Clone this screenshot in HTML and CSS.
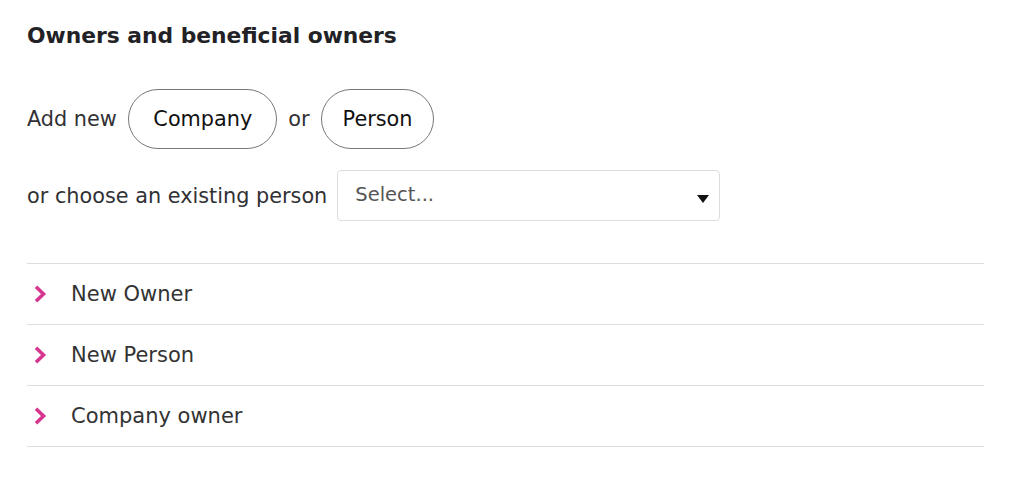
FILE: index.html
```html
<!DOCTYPE html>
<html lang="en">
<head>
<meta charset="utf-8">
<title>Owners and beneficial owners</title>
<link rel="stylesheet" href="styles.css">
</head>
<body>
<main class="panel">
  <h2 class="title">Owners and beneficial owners</h2>
  <div class="add-row">
    <span class="label">Add new</span>
    <button class="pill" type="button">Company</button>
    <span class="label">or</span>
    <button class="pill" type="button">Person</button>
  </div>
  <div class="choose-row">
    <span class="label">or choose an existing person</span>
    <div class="select">
      <span class="placeholder">Select...</span>
      <span class="caret"></span>
    </div>
  </div>
  <ul class="list">
    <li class="item">
      <svg class="chev" viewBox="0 0 13 18" width="13" height="18"><path d="M2 1.8 L9.5 9 L2 16.2" fill="none" stroke="#d6368f" stroke-width="3.6" stroke-linejoin="miter"/></svg>
      <span class="item-text">New Owner</span>
    </li>
    <li class="item">
      <svg class="chev" viewBox="0 0 13 18" width="13" height="18"><path d="M2 1.8 L9.5 9 L2 16.2" fill="none" stroke="#d6368f" stroke-width="3.6" stroke-linejoin="miter"/></svg>
      <span class="item-text">New Person</span>
    </li>
    <li class="item">
      <svg class="chev" viewBox="0 0 13 18" width="13" height="18"><path d="M2 1.8 L9.5 9 L2 16.2" fill="none" stroke="#d6368f" stroke-width="3.6" stroke-linejoin="miter"/></svg>
      <span class="item-text">Company owner</span>
    </li>
  </ul>
</main>
</body>
</html>
```
FILE: styles.css
```css
* { box-sizing: border-box; }
html, body { margin: 0; padding: 0; background: #fff; }
body {
  font-family: "DejaVu Sans", "Open Sans", sans-serif;
  color: #2b2b2e;
}
.panel {
  padding: 22px 28px 0 27px;
}
.title {
  margin: 0;
  font-size: 21.8px;
  font-weight: 700;
  line-height: 28px;
  color: #222226;
}
.add-row {
  margin-top: 39px;
  display: flex;
  align-items: center;
  gap: 11px;
}
.label {
  font-size: 20.8px;
  color: #313134;
}
.pill {
  font-family: inherit;
  font-size: 20.8px;
  color: #111;
  background: #fff;
  border: 1px solid #777;
  border-radius: 30px;
  height: 60px;
  padding: 0 24px 0 24.5px;
  cursor: pointer;
}
.pill + .label + .pill {
  padding: 0 21px;
}
.choose-row {
  margin-top: 21px;
  display: flex;
  align-items: center;
  gap: 10px;
}
.select {
  width: 383px;
  height: 51px;
  border: 1px solid #ddd;
  border-radius: 4px;
  display: flex;
  align-items: center;
  justify-content: space-between;
  padding: 0 10px 0 17px;
}
.placeholder {
  font-size: 19.5px;
  color: #555;
  margin-top: -3px;
}
.caret {
  width: 0;
  height: 0;
  border-left: 6px solid transparent;
  border-right: 6px solid transparent;
  border-top: 8px solid #111;
  margin-top: 6px;
}
.list {
  list-style: none;
  margin: 42px 0 0 0;
  padding: 0;
  border-top: 1px solid #ddd;
}
.item {
  height: 61px;
  border-bottom: 1px solid #ddd;
  display: flex;
  align-items: center;
  padding-left: 7px;
}
.chev { flex: none; }
.item-text {
  margin-left: 24px;
  font-size: 21px;
  color: #333;
}
```
